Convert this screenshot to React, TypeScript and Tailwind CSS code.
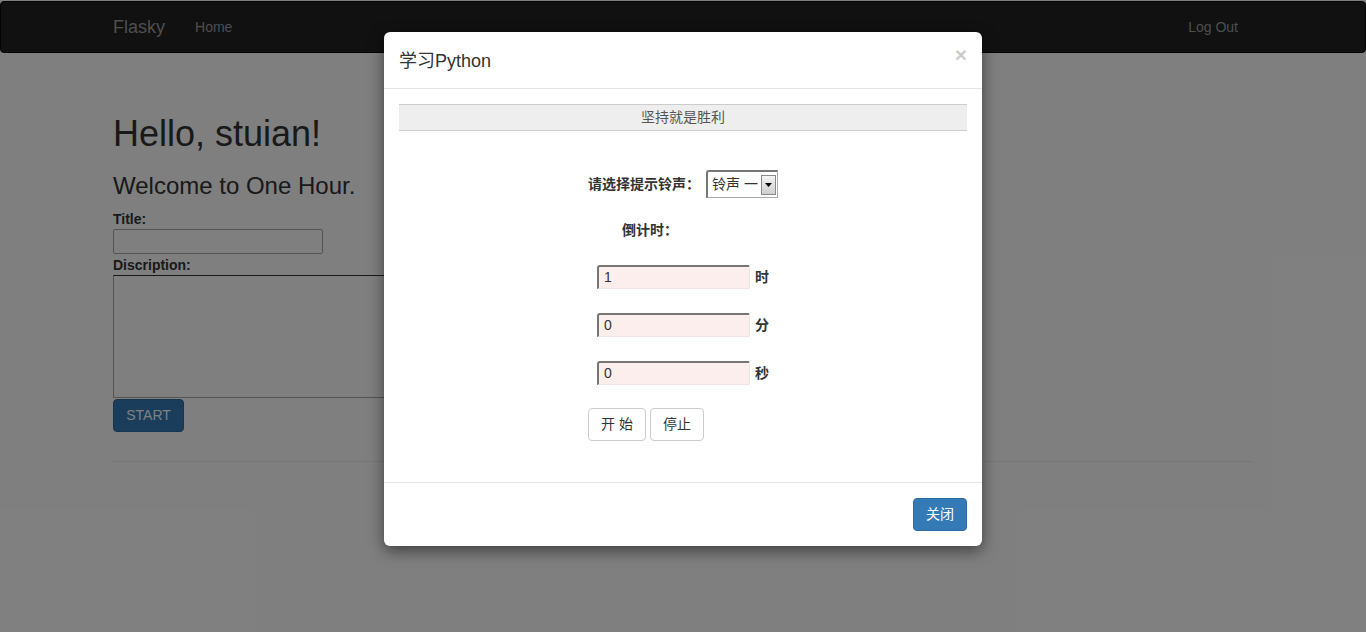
import React from "react";

const F = { fontFamily: '"Liberation Sans", Arial, "Noto Sans CJK SC", sans-serif' };

function TimeRow({ value, unit }: { value: string; unit: string }) {
  return (
    <div className="flex items-center justify-center h-[24px]">
      <div className="w-[153px] h-[24px] bg-[#fdeeee] border-t-2 border-l-2 border-r border-b border-t-[#767676] border-l-[#767676] border-r-[#f2e2e2] border-b-[#f2e2e2] rounded-tl-[3px] rounded-tr-[2px] flex items-center pl-[5px] text-[14px] text-[#333]">
        {value}
      </div>
      <span className="ml-[5px] text-[14px] font-bold text-[#333]">{unit}</span>
    </div>
  );
}

export default function App() {
  return (
    <div className="relative w-[1366px] h-[632px] overflow-hidden bg-white text-[#333] text-[14px]" style={F}>
      {/* Navbar */}
      <div className="h-[52px] mt-px bg-[#222] border border-[#080808] rounded-[4px]">
        <div className="w-[1170px] mx-auto px-[15px] h-[50px] flex items-center">
          <span className="text-[18px] text-[#9d9d9d]">Flasky</span>
          <span className="ml-[30px] text-[14px] text-[#9d9d9d]">Home</span>
          <span className="ml-auto mr-[15px] text-[14px] text-[#9d9d9d]">Log Out</span>
        </div>
      </div>

      {/* Main content */}
      <div className="w-[1170px] mx-auto px-[15px]">
        <h1 className="mt-[61px] text-[36px] leading-[40px] text-[#333]">Hello, stuian!</h1>
        <h3 className="mt-[19px] text-[24px] leading-[26px] text-[#333]">Welcome to One Hour.</h3>
        <div className="mt-[10px] text-[14px] font-bold leading-[20px]">Title:</div>
        <div className="w-[210px] h-[25px] border border-[#a9a9a9] rounded-[2px] bg-white" />
        <div className="mt-px text-[14px] font-bold leading-[20px]">Discription:</div>
        <div className="w-[420px] h-[123px] border border-[#a9a9a9] border-t-[#333] bg-white" />
        <div className="mt-px w-[71px] h-[33px] rounded-[4px] bg-[#337ab7] border border-[#2e6da4] text-white flex items-center justify-center text-[14px]">
          START
        </div>
        <div className="mt-[29px] border-t border-[#eee]" />
      </div>

      {/* Backdrop */}
      <div className="absolute inset-0 bg-black/50" />

      {/* Modal */}
      <div className="absolute top-[32px] left-[384px] w-[598px] bg-white rounded-[6px] shadow-[0_5px_15px_rgba(0,0,0,0.5)]">
        <div className="h-[57px] px-[15px] flex items-center border-b border-[#e5e5e5] relative">
          <span className="text-[18px] text-[#333] leading-[26px] mt-[2px]">学习Python</span>
          <span className="absolute right-[15px] top-[12px] text-[21px] font-bold text-black opacity-20 leading-[21px]">×</span>
        </div>
        <div className="p-[15px]">
          <div className="h-[27px] bg-[#eee] border-t border-b border-[#ccc] flex items-center justify-center text-[14px] text-[#555]">
            坚持就是胜利
          </div>
          <div className="mt-[39px] flex items-center justify-center">
            <span className="text-[14px] font-bold text-[#333] mr-[6px] whitespace-nowrap">请选择提示铃声：</span>
            <div className="w-[72px] h-[28px] border border-[#a9a9a9] border-t-[#767676] border-l-[#767676] border-l-2 border-t-2 rounded-tl-[3px] flex items-center bg-white">
              <span className="flex-1 pl-[4px] text-[14px] text-[#333] whitespace-nowrap">铃声 一</span>
              <div className="w-[15px] h-[20px] mr-px border border-[#888] bg-gradient-to-b from-[#f4f4f4] to-[#cfcfcf] flex items-center justify-center">
                <svg width="7" height="4" viewBox="0 0 7 4"><path d="M0 0h7L3.5 4z" fill="#000" /></svg>
              </div>
            </div>
          </div>
          <div className="mt-[22px] h-[20px] flex items-center justify-center">
            <span className="text-[14px] font-bold text-[#333] mr-[66px] whitespace-nowrap">倒计时：</span>
          </div>
          <div className="mt-[25px] flex flex-col gap-[24px]">
            <TimeRow value="1" unit="时" />
            <TimeRow value="0" unit="分" />
            <TimeRow value="0" unit="秒" />
          </div>
          <div className="mt-[23px] flex justify-center gap-[4px] pr-[74px]">
            <div className="w-[58px] h-[33px] border border-[#ccc] rounded-[4px] bg-white flex items-center justify-center text-[14px] text-[#333]">开 始</div>
            <div className="w-[54px] h-[33px] border border-[#ccc] rounded-[4px] bg-white flex items-center justify-center text-[14px] text-[#333]">停止</div>
          </div>
          <div className="h-[26px]" />
        </div>
        <div className="border-t border-[#e5e5e5] p-[15px] flex justify-end">
          <div className="w-[54px] h-[33px] rounded-[4px] bg-[#337ab7] border border-[#2e6da4] text-white flex items-center justify-center text-[14px]">关闭</div>
        </div>
      </div>
    </div>
  );
}
